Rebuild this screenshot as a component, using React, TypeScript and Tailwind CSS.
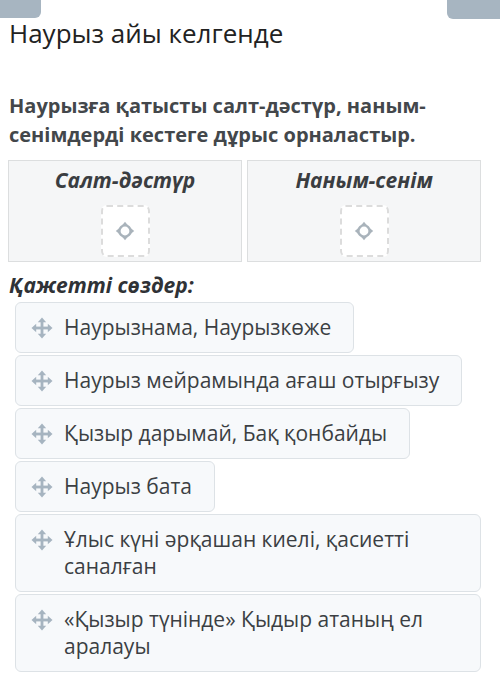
import React from 'react';

const words = [
  'Наурызнама, Наурызкөже',
  'Наурыз мейрамында ағаш отырғызу',
  'Қызыр дарымай, Бақ қонбайды',
  'Наурыз бата',
  'Ұлыс күні әрқашан киелі, қасиетті саналған',
  '«Қызыр түнінде» Қыдыр атаның ел аралауы',
];

const columns = ['Салт-дәстүр', 'Наным-сенім'];

function MoveIcon() {
  return (
    <svg width="22" height="22" viewBox="0 0 22 22" fill="#a6b4c0">
      <rect x="9.6" y="4" width="2.8" height="14" />
      <rect x="4" y="9.6" width="14" height="2.8" />
      <polygon points="11,0.5 6.8,5.2 15.2,5.2" />
      <polygon points="11,21.5 6.8,16.8 15.2,16.8" />
      <polygon points="0.5,11 5.2,6.8 5.2,15.2" />
      <polygon points="21.5,11 16.8,6.8 16.8,15.2" />
    </svg>
  );
}

function TargetIcon() {
  return (
    <svg width="20" height="20" viewBox="0 0 20 20">
      <circle cx="10" cy="10" r="5.6" fill="none" stroke="#a9b3bb" strokeWidth="2.4" />
      <g fill="#a9b3bb">
        <polygon points="10,0.8 7,4.4 13,4.4" />
        <polygon points="10,19.2 7,15.6 13,15.6" />
        <polygon points="0.8,10 4.4,7 4.4,13" />
        <polygon points="19.2,10 15.6,7 15.6,13" />
      </g>
    </svg>
  );
}

export default function App() {
  return (
    <div className="relative w-[500px] h-[682px] overflow-hidden bg-white font-['Open_Sans',sans-serif]">
      <div className="absolute left-0 top-0 w-[41px] h-[18px] bg-[#a7b5c1] rounded-br-[6px]" />
      <div className="absolute right-0 top-0 w-[53px] h-[19px] bg-[#a7b5c1] rounded-bl-[6px]" />

      <h1 className="pt-[16px] pl-[9px] text-[26px] leading-[34px] text-[#222] font-normal">
        Наурыз айы келгенде
      </h1>

      <p className="mt-[41px] pl-[9px] pr-[40px] text-[20px] leading-[29px] font-bold text-[#43474b]">
        Наурызға қатысты салт-дәстүр, наным-сенімдерді кестеге дұрыс орналастыр.
      </p>

      <div className="mt-[11px] ml-[8px] w-[473px] grid grid-cols-2 gap-[5px]">
        {columns.map((c) => (
          <div key={c} className="h-[102px] bg-[#f5f6f7] border border-[#dcdedf] flex flex-col items-center pt-[5px]">
            <div className="text-[21px] leading-[28px] font-bold italic text-[#3a3d41]">{c}</div>
            <div className="mt-[11px] w-[49px] h-[52px] bg-white rounded-[6px] border-2 border-dashed border-[#dcdcdc] flex items-center justify-center">
              <TargetIcon />
            </div>
          </div>
        ))}
      </div>

      <div className="mt-[9px] pl-[9px] text-[21px] leading-[28px] font-bold italic text-[#2f3236]">
        Қажетті сөздер:
      </div>

      <div className="mt-[3px] ml-[15px] w-[466px] flex flex-col items-start gap-[2px]">
        {words.map((w) => (
          <div
            key={w}
            className="flex items-start max-w-full bg-[#f7f9fb] border border-[#dde2e6] rounded-[6px] py-[11px] pl-[15px] pr-[22px]"
          >
            <div className="h-[27px] flex items-center shrink-0 mr-[11px]">
              <MoveIcon />
            </div>
            <span className="text-[21px] leading-[27px] text-[#3b3f43]">{w}</span>
          </div>
        ))}
      </div>
    </div>
  );
}
